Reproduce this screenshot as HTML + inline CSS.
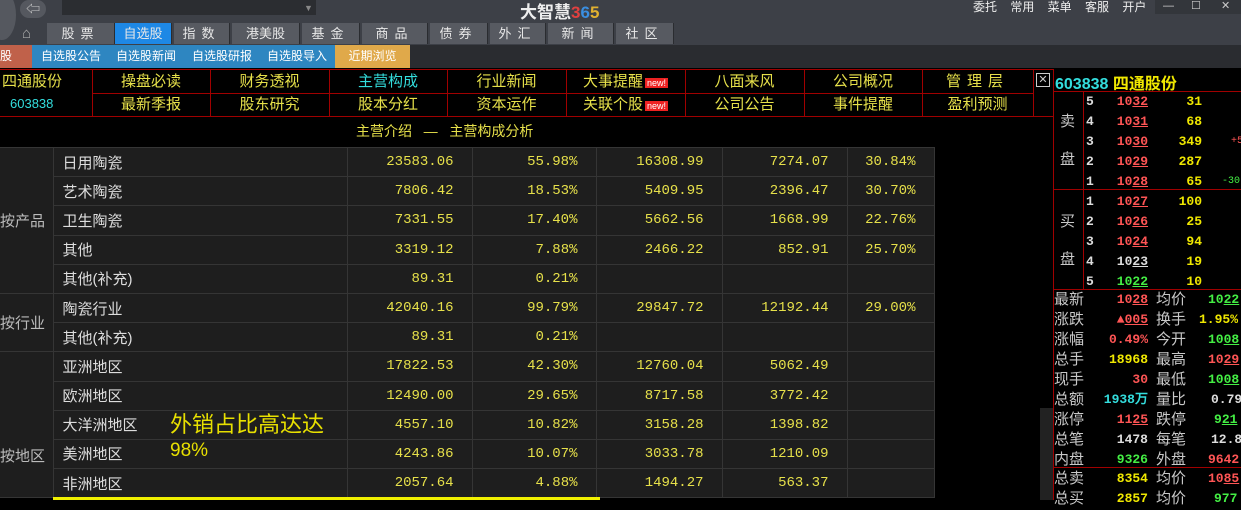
<!DOCTYPE html>
<html><head><meta charset="utf-8"><style>
*{margin:0;padding:0;box-sizing:border-box}
body{width:1241px;height:500px;overflow:hidden;background:#000;font-family:"Liberation Sans","Noto Sans CJK SC",sans-serif;position:relative}
.a{position:absolute;white-space:nowrap}
.top{left:0;top:0;width:1241px;height:45px;background:#3d4047}
.tab{top:23px;height:21px;background:#575a61;color:#e8e8e8;font-size:13px;text-align:center;line-height:21px;border-right:1px solid #2a2c30;letter-spacing:6px}
.cell{color:#e6e04a;font-size:15px;text-align:center;line-height:23px}
table{border-collapse:collapse;table-layout:fixed}
td{border:1px solid #353535;height:29.2px;font-size:14px;color:#e6e04a;font-family:"Liberation Mono","Noto Sans CJK SC",monospace;text-align:right;padding-right:18px;background:#1e1e1e}
td.n{color:#ddd;text-align:left;padding-left:9px;font-family:"Liberation Sans","Noto Sans CJK SC",sans-serif;font-size:15px}
td.g{color:#bbb;text-align:left;padding:0;font-family:"Liberation Sans","Noto Sans CJK SC",sans-serif;font-size:15px;border-left:none}
.ob{font-family:"Liberation Mono","DejaVu Sans Mono",monospace;font-weight:bold;font-size:13px}
.r{color:#ff5555}.y{color:#f0e800}.gr{color:#44ee44}.w{color:#ddd}.c{color:#33dddd}
.lb{color:#c8c8c8;font-size:15px;font-weight:normal;font-family:"Liberation Sans","Noto Sans CJK SC",sans-serif}
</style></head><body>
<div class="a top"></div>
<div class="a" style="left:-12px;top:-10px;width:28px;height:50px;border-radius:50%;background:#55585f"></div>
<div class="a" style="left:20px;top:0;width:26px;height:18px;border-radius:9px;background:#55585f;color:#ccc;font-size:14px;line-height:18px;text-align:center">⇦</div>
<div class="a" style="left:62px;top:0;width:254px;height:15px;background:#2b2d31"></div>
<div class="a" style="left:304px;top:3px;color:#888;font-size:9px">▼</div>
<div class="a" style="left:520px;top:-2px;font-size:17px;font-weight:bold;color:#eee">大智慧<span style="color:#e04040">3</span><span style="color:#3a8ee0">6</span><span style="color:#e0b030">5</span></div>
<div class="a" style="left:973px;top:0;font-size:12px;color:#eee;line-height:15px;word-spacing:10px">委托 常用 菜单 客服 开户</div>
<div class="a" style="left:1155px;top:0;width:86px;height:14px;background:#33363b;color:#ccc;font-size:11px;line-height:13px">
<span style="position:absolute;left:8px">—</span><span style="position:absolute;left:36px">☐</span><span style="position:absolute;left:66px">✕</span></div>
<div class="a" style="left:22px;top:25px;color:#aaa;font-size:15px">⌂</div>
<div class="a tab" style="left:47px;width:68px">股票</div>
<div class="a tab" style="left:115px;width:57px;background:#1e88e5;letter-spacing:0">自选股</div>
<div class="a tab" style="left:174px;width:56px">指数</div>
<div class="a tab" style="left:232px;width:68px;letter-spacing:0">港美股</div>
<div class="a tab" style="left:302px;width:58px">基金</div>
<div class="a tab" style="left:362px;width:66px">商品</div>
<div class="a tab" style="left:430px;width:58px">债券</div>
<div class="a tab" style="left:490px;width:56px">外汇</div>
<div class="a tab" style="left:548px;width:66px">新闻</div>
<div class="a tab" style="left:616px;width:58px">社区</div>
<div class="a" style="left:0;top:45px;width:1241px;height:23px;background:#2a2c30"></div>
<div class="a" style="left:0;top:45px;width:32px;height:23px;background:#c0614a;color:#fff;font-size:12px;line-height:23px">股</div>
<div class="a" style="left:32px;top:45px;width:303px;height:23px;background:#2e86c1;color:#fff;font-size:12px;line-height:23px">
<span style="position:absolute;left:9px">自选股公告</span><span style="position:absolute;left:84px">自选股新闻</span><span style="position:absolute;left:160px">自选股研报</span><span style="position:absolute;left:235px">自选股导入</span></div>
<div class="a" style="left:335px;top:45px;width:75px;height:23px;background:#e0a94a;color:#fff;font-size:12px;line-height:23px;text-align:center">近期浏览</div>
<!-- red grid -->
<div class="a" style="left:0;top:69px;width:1053px;height:48px;border-top:1px solid #a00000;border-bottom:1px solid #a00000"></div>
<div class="a" style="left:92px;top:93px;width:941px;height:1px;background:#a00000"></div>
<div class="a" style="left:92px;top:69px;width:1px;height:48px;background:#a00000"></div>
<div class="a" style="left:210px;top:69px;width:1px;height:48px;background:#a00000"></div>
<div class="a" style="left:329px;top:69px;width:1px;height:48px;background:#a00000"></div>
<div class="a" style="left:447px;top:69px;width:1px;height:48px;background:#a00000"></div>
<div class="a" style="left:566px;top:69px;width:1px;height:48px;background:#a00000"></div>
<div class="a" style="left:685px;top:69px;width:1px;height:48px;background:#a00000"></div>
<div class="a" style="left:804px;top:69px;width:1px;height:48px;background:#a00000"></div>
<div class="a" style="left:922px;top:69px;width:1px;height:48px;background:#a00000"></div>
<div class="a" style="left:1033px;top:69px;width:1px;height:48px;background:#a00000"></div>
<div class="a" style="left:1053px;top:69px;width:1px;height:431px;background:#a00000"></div>
<div class="a cell" style="left:0;top:70px;width:92px;text-align:left;padding-left:2px">四通股份</div>
<div class="a c" style="left:10px;top:96px;font-size:13px">603838</div>
<div class="a cell" style="left:92px;top:70px;width:118px">操盘必读</div>
<div class="a cell" style="left:210px;top:70px;width:119px">财务透视</div>
<div class="a cell" style="left:329px;top:70px;width:118px;color:#33dddd">主营构成</div>
<div class="a cell" style="left:447px;top:70px;width:119px">行业新闻</div>
<div class="a cell" style="left:566px;top:70px;width:119px">大事提醒<span style="background:#e22;color:#fff;font-size:9px;padding:0 2px;margin-left:2px">new!</span></div>
<div class="a cell" style="left:685px;top:70px;width:119px">八面来风</div>
<div class="a cell" style="left:804px;top:70px;width:118px">公司概况</div>
<div class="a cell" style="left:922px;top:70px;width:111px;letter-spacing:6px">管理层</div>
<div class="a cell" style="left:92px;top:93px;width:118px">最新季报</div>
<div class="a cell" style="left:210px;top:93px;width:119px">股东研究</div>
<div class="a cell" style="left:329px;top:93px;width:118px">股本分红</div>
<div class="a cell" style="left:447px;top:93px;width:119px">资本运作</div>
<div class="a cell" style="left:566px;top:93px;width:119px">关联个股<span style="background:#e22;color:#fff;font-size:9px;padding:0 2px;margin-left:2px">new!</span></div>
<div class="a cell" style="left:685px;top:93px;width:119px">公司公告</div>
<div class="a cell" style="left:804px;top:93px;width:118px">事件提醒</div>
<div class="a cell" style="left:922px;top:93px;width:111px">盈利预测</div>
<div class="a" style="left:1036px;top:73px;width:14px;height:14px;border:1px solid #ccc;color:#ccc;font-size:11px;line-height:12px;text-align:center">✕</div>
<div class="a" style="left:356px;top:121px;color:#e6e04a;font-size:14px">主营介绍 &nbsp; — &nbsp; 主营构成分析</div>
<!-- table -->
<table class="a" style="left:0;top:147px;width:934px">
<colgroup><col style="width:53px"><col style="width:294px"><col style="width:125px"><col style="width:124px"><col style="width:126px"><col style="width:125px"><col style="width:87px"></colgroup>
<tr><td class="g" rowspan="5">按产品</td><td class="n">日用陶瓷</td><td>23583.06</td><td>55.98%</td><td>16308.99</td><td>7274.07</td><td>30.84%</td></tr>
<tr><td class="n">艺术陶瓷</td><td>7806.42</td><td>18.53%</td><td>5409.95</td><td>2396.47</td><td>30.70%</td></tr>
<tr><td class="n">卫生陶瓷</td><td>7331.55</td><td>17.40%</td><td>5662.56</td><td>1668.99</td><td>22.76%</td></tr>
<tr><td class="n">其他</td><td>3319.12</td><td>7.88%</td><td>2466.22</td><td>852.91</td><td>25.70%</td></tr>
<tr><td class="n">其他(补充)</td><td>89.31</td><td>0.21%</td><td></td><td></td><td></td></tr>
<tr><td class="g" rowspan="2">按行业</td><td class="n">陶瓷行业</td><td>42040.16</td><td>99.79%</td><td>29847.72</td><td>12192.44</td><td>29.00%</td></tr>
<tr><td class="n">其他(补充)</td><td>89.31</td><td>0.21%</td><td></td><td></td><td></td></tr>
<tr><td class="g" rowspan="5" style="vertical-align:bottom;padding-bottom:31px">按地区</td><td class="n">亚洲地区</td><td>17822.53</td><td>42.30%</td><td>12760.04</td><td>5062.49</td><td></td></tr>
<tr><td class="n">欧洲地区</td><td>12490.00</td><td>29.65%</td><td>8717.58</td><td>3772.42</td><td></td></tr>
<tr><td class="n">大洋洲地区</td><td>4557.10</td><td>10.82%</td><td>3158.28</td><td>1398.82</td><td></td></tr>
<tr><td class="n">美洲地区</td><td>4243.86</td><td>10.07%</td><td>3033.78</td><td>1210.09</td><td></td></tr>
<tr><td class="n">非洲地区</td><td>2057.64</td><td>4.88%</td><td>1494.27</td><td>563.37</td><td></td></tr>
</table>
<div class="a" style="left:53px;top:497px;width:547px;height:3px;background:#f0f000"></div>
<div class="a" style="left:170px;top:407px;color:#e8e000;font-size:22px">外销占比高达达</div>
<div class="a" style="left:170px;top:440px;color:#e8e000;font-size:19px">98%</div>
<div class="a" style="left:1040px;top:408px;width:13px;height:92px;background:#222"></div>
<!-- right panel -->
<div class="a" style="left:1055px;top:70px;font-size:16px;font-weight:bold"><span class="c">603838</span> <span class="y">四通股份</span></div>
<div class="a" style="left:1053px;top:91px;width:188px;height:1px;background:#a00000"></div>
<div class="a" style="left:1083px;top:91px;width:1px;height:198px;background:#a00000"></div>
<div class="a" style="left:1053px;top:189px;width:188px;height:1px;background:#a00000"></div>
<div class="a" style="left:1053px;top:289px;width:188px;height:1px;background:#a00000"></div>
<div class="a" style="left:1053px;top:467px;width:188px;height:1px;background:#a00000"></div>
<div class="a lb" style="left:1060px;top:110px">卖</div>
<div class="a lb" style="left:1060px;top:148px">盘</div>
<div class="a lb" style="left:1060px;top:210px">买</div>
<div class="a lb" style="left:1060px;top:248px">盘</div>
<div class="a ob" style="left:1086px;top:92px;width:155px;line-height:20px">
<div style="position:relative;height:20px"><span class="w">5</span><span class="r" style="position:absolute;right:93px">10<u>32</u></span><span class="y" style="position:absolute;right:39px">31</span></div>
<div style="position:relative;height:20px"><span class="w">4</span><span class="r" style="position:absolute;right:93px">10<u>31</u></span><span class="y" style="position:absolute;right:39px">68</span></div>
<div style="position:relative;height:20px"><span class="w">3</span><span class="r" style="position:absolute;right:93px">10<u>30</u></span><span class="y" style="position:absolute;right:39px">349</span><span class="r" style="position:absolute;left:145px;font-size:10px;font-weight:normal">+5</span></div>
<div style="position:relative;height:20px"><span class="w">2</span><span class="r" style="position:absolute;right:93px">10<u>29</u></span><span class="y" style="position:absolute;right:39px">287</span></div>
<div style="position:relative;height:20px"><span class="w">1</span><span class="r" style="position:absolute;right:93px">10<u>28</u></span><span class="y" style="position:absolute;right:39px">65</span><span class="gr" style="position:absolute;left:136px;font-size:10px;font-weight:normal">-30</span></div>
<div style="position:relative;height:20px"><span class="w">1</span><span class="r" style="position:absolute;right:93px">10<u>27</u></span><span class="y" style="position:absolute;right:39px">100</span></div>
<div style="position:relative;height:20px"><span class="w">2</span><span class="r" style="position:absolute;right:93px">10<u>26</u></span><span class="y" style="position:absolute;right:39px">25</span></div>
<div style="position:relative;height:20px"><span class="w">3</span><span class="r" style="position:absolute;right:93px">10<u>24</u></span><span class="y" style="position:absolute;right:39px">94</span></div>
<div style="position:relative;height:20px"><span class="w">4</span><span class="w" style="position:absolute;right:93px">10<u>23</u></span><span class="y" style="position:absolute;right:39px">19</span></div>
<div style="position:relative;height:20px"><span class="w">5</span><span class="gr" style="position:absolute;right:93px">10<u>22</u></span><span class="y" style="position:absolute;right:39px">10</span></div>
</div>
<div class="a ob" style="left:1054px;top:290px;width:200px;line-height:20px">
<div style="position:relative;height:20px"><span class="lb">最新</span><span class="r" style="position:absolute;left:60px;width:34px;text-align:right">10<u>28</u></span><span class="lb" style="position:absolute;left:102px">均价</span><span class="gr" style="position:absolute;left:154px">10<u>22</u></span></div>
<div style="position:relative;height:20px"><span class="lb">涨跌</span><span class="r" style="position:absolute;left:55px;width:39px;text-align:right">▲<u>005</u></span><span class="lb" style="position:absolute;left:102px">换手</span><span class="y" style="position:absolute;left:145px">1.95%</span></div>
<div style="position:relative;height:20px"><span class="lb">涨幅</span><span class="r" style="position:absolute;left:40px;width:54px;text-align:right">0.49%</span><span class="lb" style="position:absolute;left:102px">今开</span><span class="gr" style="position:absolute;left:154px">10<u>08</u></span></div>
<div style="position:relative;height:20px"><span class="lb">总手</span><span class="y" style="position:absolute;left:40px;width:54px;text-align:right">18968</span><span class="lb" style="position:absolute;left:102px">最高</span><span class="r" style="position:absolute;left:154px">10<u>29</u></span></div>
<div style="position:relative;height:20px"><span class="lb">现手</span><span class="r" style="position:absolute;left:40px;width:54px;text-align:right">30</span><span class="lb" style="position:absolute;left:102px">最低</span><span class="gr" style="position:absolute;left:154px">10<u>08</u></span></div>
<div style="position:relative;height:20px"><span class="lb">总额</span><span class="c" style="position:absolute;left:30px;width:64px;text-align:right">1938万</span><span class="lb" style="position:absolute;left:102px">量比</span><span class="w" style="position:absolute;left:157px">0.79</span></div>
<div style="position:relative;height:20px"><span class="lb">涨停</span><span class="r" style="position:absolute;left:40px;width:54px;text-align:right">11<u>25</u></span><span class="lb" style="position:absolute;left:102px">跌停</span><span class="gr" style="position:absolute;left:160px">9<u>21</u></span></div>
<div style="position:relative;height:20px"><span class="lb">总笔</span><span class="w" style="position:absolute;left:40px;width:54px;text-align:right">1478</span><span class="lb" style="position:absolute;left:102px">每笔</span><span class="w" style="position:absolute;left:157px">12.8</span></div>
<div style="position:relative;height:20px"><span class="lb">内盘</span><span class="gr" style="position:absolute;left:40px;width:54px;text-align:right">9326</span><span class="lb" style="position:absolute;left:102px">外盘</span><span class="r" style="position:absolute;left:154px">9642</span></div>
<div style="position:relative;height:20px;margin-top:-1px"><span class="lb">总卖</span><span class="y" style="position:absolute;left:40px;width:54px;text-align:right">8354</span><span class="lb" style="position:absolute;left:102px">均价</span><span class="r" style="position:absolute;left:154px">10<u>85</u></span></div>
<div style="position:relative;height:20px"><span class="lb">总买</span><span class="y" style="position:absolute;left:40px;width:54px;text-align:right">2857</span><span class="lb" style="position:absolute;left:102px">均价</span><span class="gr" style="position:absolute;left:160px">977</span></div>
</div>
</body></html>
